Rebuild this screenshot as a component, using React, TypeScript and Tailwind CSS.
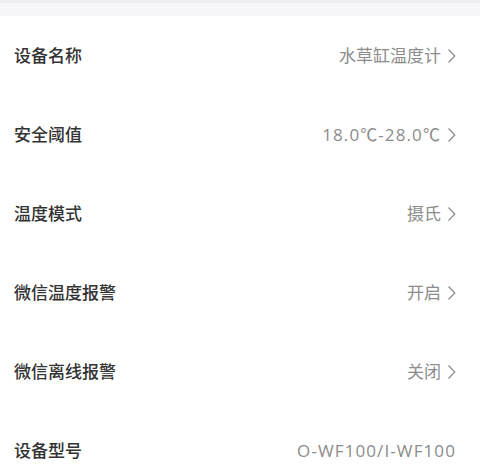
import React from "react";

const rows: { label: string; value: string; arrow: boolean; latin?: boolean }[] = [
  { label: "设备名称", value: "水草缸温度计", arrow: true },
  { label: "安全阈值", value: "18.0℃-28.0℃", arrow: true, latin: true },
  { label: "温度模式", value: "摄氏", arrow: true },
  { label: "微信温度报警", value: "开启", arrow: true },
  { label: "微信离线报警", value: "关闭", arrow: true },
  { label: "设备型号", value: "O-WF100/I-WF100", arrow: false, latin: true },
];

function Chevron() {
  return (
    <svg width="9" height="16" viewBox="0 0 9 16" className="ml-[6px]">
      <polyline points="1.5,1.5 7.8,8 1.5,14.5" fill="none" stroke="#8c8c8c" strokeWidth="1.2" />
    </svg>
  );
}

export default function App() {
  return (
    <div
      className="w-[480px] h-[474px] bg-white overflow-hidden"
      style={{ fontFamily: '"Open Sans", "Noto Sans CJK SC", sans-serif' }}
    >
      <div className="h-[16px] bg-[#f7f7f9] border-t-[3px] border-[#eeeef0]" />
      {rows.map((r) => (
        <div key={r.label} className="h-[79px] flex items-center justify-between pl-[14px] pr-[24px]">
          <span className="text-[17px] text-[#333333] font-medium">{r.label}</span>
          <span className="flex items-center text-[17px] text-[#8c8c8c]">
            <span className={r.latin ? "tracking-[1.1px]" : ""}>{r.value}</span>
            {r.arrow && <Chevron />}
          </span>
        </div>
      ))}
    </div>
  );
}
